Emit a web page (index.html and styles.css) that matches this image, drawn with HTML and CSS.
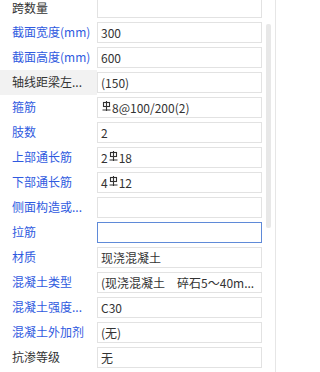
FILE: index.html
```html
<!DOCTYPE html>
<html lang="zh">
<head>
<meta charset="utf-8">
<link rel="stylesheet" href="styles.css">
</head>
<body>
<div class="panel">
  <div class="list">
    <div class="row first"><div class="label">跨数量</div><div class="val"></div></div>
    <div class="row"><div class="label blue">截面宽度(mm)</div><div class="val">300</div></div>
    <div class="row"><div class="label blue">截面高度(mm)</div><div class="val">600</div></div>
    <div class="row grey"><div class="label">轴线距梁左...</div><div class="val">(150)</div></div>
    <div class="row"><div class="label blue">箍筋</div><div class="val"><svg class="rb" viewBox="0 0 9 10"><rect x="1.5" y="1.5" width="6" height="4"/><path d="M4.5 0V10M0.5 9H8.5"/></svg>8@100/200(2)</div></div>
    <div class="row"><div class="label blue">肢数</div><div class="val">2</div></div>
    <div class="row"><div class="label blue">上部通长筋</div><div class="val">2<svg class="rb" viewBox="0 0 9 10"><rect x="1.5" y="1.5" width="6" height="4"/><path d="M4.5 0V10M0.5 9H8.5"/></svg>18</div></div>
    <div class="row"><div class="label blue">下部通长筋</div><div class="val">4<svg class="rb" viewBox="0 0 9 10"><rect x="1.5" y="1.5" width="6" height="4"/><path d="M4.5 0V10M0.5 9H8.5"/></svg>12</div></div>
    <div class="row"><div class="label blue">侧面构造或...</div><div class="val"></div></div>
    <div class="row"><div class="label blue">拉筋</div><div class="val active"></div></div>
    <div class="row"><div class="label blue">材质</div><div class="val">现浇混凝土</div></div>
    <div class="row"><div class="label blue">混凝土类型</div><div class="val">(现浇混凝土　碎石5～40m...</div></div>
    <div class="row"><div class="label blue">混凝土强度...</div><div class="val">C30</div></div>
    <div class="row"><div class="label blue">混凝土外加剂</div><div class="val">(无)</div></div>
    <div class="row"><div class="label">抗渗等级</div><div class="val">无</div></div>
  </div>
  <div class="track"><div class="thumb"></div></div>
</div>
</body>
</html>
```
FILE: styles.css
```css
html, body {
  margin: 0;
  padding: 0;
  background: #fff;
}
body {
  width: 277px;
  height: 372px;
  overflow: hidden;
  font-family: "Noto Sans CJK SC", "Noto Sans", sans-serif;
  font-size: 12px;
  color: #333;
}
.panel {
  display: flex;
  width: 276px;
  height: 372px;
  border-right: 1px solid #e6e6e6;
  box-sizing: border-box;
}
.list {
  width: 262px;
  flex: none;
}
.row {
  display: grid;
  grid-template-columns: 97px 165px;
  height: 25px;
}
.row.first {
  height: 20px;
}
.row.first .label {
  line-height: 15px;
}
.row.first .val {
  margin-top: 0;
  height: 18px;
  border-top: none;
}
.row.grey .label {
  background: #f2f2f2;
}
.label {
  padding-left: 12px;
  line-height: 24px;
  white-space: nowrap;
  overflow: hidden;
  color: #333;
}
.label.blue {
  color: #2f5ae0;
}
.val {
  margin: 2px 0;
  height: 21px;
  box-sizing: border-box;
  border: 1px solid #e2e2e2;
  padding-left: 3px;
  line-height: 19px;
  white-space: nowrap;
  overflow: hidden;
  color: #333;
}
.val.active {
  border-color: #5f8ad8;
}
.rb {
  width: 9px;
  height: 10px;
  margin: 0 1px;
  vertical-align: 2px;
  fill: none;
  stroke: #333;
  stroke-width: 1.1;
}
.track {
  flex: none;
  width: 13px;
  padding: 24px 0 0 4px;
  box-sizing: border-box;
}
.thumb {
  width: 5px;
  height: 204px;
  background: #e8e8e8;
  border-radius: 2px;
}
```
